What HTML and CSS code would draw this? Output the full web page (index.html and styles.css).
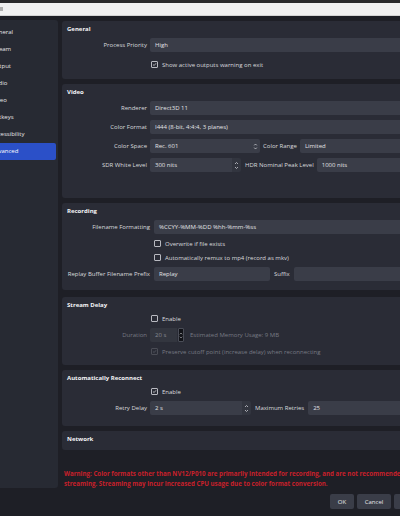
FILE: index.html
```html
<!DOCTYPE html>
<html lang="en">
<head>
    <meta charset="UTF-8">
    <meta name="viewport" content="width=device-width, initial-scale=1.0">
    <title>Settings</title>
    <link rel="stylesheet" href="styles.css">
</head>
<body>
    <div class="titlebar"><span class="app-icon"></span></div>

    <div class="window">
        <div class="main">
            <ul class="sidebar">
                <li>General</li>
                <li>Stream</li>
                <li>Output</li>
                <li>Audio</li>
                <li>Video</li>
                <li>Hotkeys</li>
                <li>Accessibility</li>
                <li class="active">Advanced</li>
            </ul>

            <div class="content">
                <!-- General -->
                <section class="group general">
                    <h2>General</h2>
                    <div class="row">
                        <span class="lbl">Process Priority</span>
                        <div class="field">High</div>
                    </div>
                    <div class="row cb-row spaced">
                        <span class="box checked"><svg viewBox="0 0 7 7"><path d="M1.5 3.6 L3 5 L5.6 1.8"/></svg></span>
                        <span>Show active outputs warning on exit</span>
                    </div>
                </section>

                <!-- Video -->
                <section class="group video">
                    <h2>Video</h2>
                    <div class="row">
                        <span class="lbl">Renderer</span>
                        <div class="field">Direct3D 11</div>
                    </div>
                    <div class="row">
                        <span class="lbl">Color Format</span>
                        <div class="field">I444 (8-bit, 4:4:4, 3 planes)</div>
                    </div>
                    <div class="row">
                        <span class="lbl">Color Space</span>
                        <div class="field combo color-space">
                            <span class="val">Rec. 601</span>
                            <svg class="arrows small" viewBox="0 0 5 9"><path d="M1.2 3.4 L2.5 2 L3.8 3.4 M1.2 5.6 L2.5 7 L3.8 5.6"/></svg>
                        </div>
                        <span class="lbl-inline">Color Range</span>
                        <div class="field">Limited</div>
                    </div>
                    <div class="row">
                        <span class="lbl">SDR White Level</span>
                        <div class="spin sdr">
                            <span class="val">300 nits</span>
                            <span class="spin-btns"><svg class="arrows" viewBox="0 0 5 11"><path d="M1 4 L2.5 2.5 L4 4 M1 7 L2.5 8.5 L4 7"/></svg></span>
                        </div>
                        <span class="lbl-inline hdr">HDR Nominal Peak Level</span>
                        <div class="field">1000 nits</div>
                    </div>
                </section>

                <!-- Recording -->
                <section class="group recording">
                    <h2>Recording</h2>
                    <div class="row">
                        <span class="lbl">Filename Formatting</span>
                        <div class="field">%CCYY-%MM-%DD %hh-%mm-%ss</div>
                    </div>
                    <div class="row cb-row">
                        <span class="box"></span>
                        <span>Overwrite if file exists</span>
                    </div>
                    <div class="row cb-row">
                        <span class="box"></span>
                        <span>Automatically remux to mp4 (record as mkv)</span>
                    </div>
                    <div class="row">
                        <span class="lbl">Replay Buffer Filename Prefix</span>
                        <div class="field prefix">Replay</div>
                        <span class="lbl-inline">Suffix</span>
                        <div class="field"></div>
                    </div>
                </section>

                <!-- Stream Delay -->
                <section class="group delay">
                    <h2>Stream Delay</h2>
                    <div class="row cb-row">
                        <span class="box"></span>
                        <span>Enable</span>
                    </div>
                    <div class="row">
                        <span class="lbl disabled">Duration</span>
                        <div class="spin duration">
                            <span class="val">20 s</span>
                            <span class="spin-btns dark"><svg class="arrows" viewBox="0 0 5 11"><path d="M1 4 L2.5 2.5 L4 4 M1 7 L2.5 8.5 L4 7"/></svg></span>
                        </div>
                        <span class="lbl-inline disabled memory">Estimated Memory Usage: 9 MB</span>
                    </div>
                    <div class="row cb-row disabled">
                        <span class="box checked dim"><svg viewBox="0 0 7 7"><path d="M1.5 3.6 L3 5 L5.6 1.8"/></svg></span>
                        <span>Preserve cutoff point (increase delay) when reconnecting</span>
                    </div>
                </section>

                <!-- Automatically Reconnect -->
                <section class="group reconnect">
                    <h2>Automatically Reconnect</h2>
                    <div class="row cb-row">
                        <span class="box checked"><svg viewBox="0 0 7 7"><path d="M1.5 3.6 L3 5 L5.6 1.8"/></svg></span>
                        <span>Enable</span>
                    </div>
                    <div class="row">
                        <span class="lbl">Retry Delay</span>
                        <div class="spin retry">
                            <span class="val">2 s</span>
                            <span class="spin-btns"><svg class="arrows" viewBox="0 0 5 11"><path d="M1 4 L2.5 2.5 L4 4 M1 7 L2.5 8.5 L4 7"/></svg></span>
                        </div>
                        <span class="lbl-inline retries">Maximum Retries</span>
                        <div class="field">25</div>
                    </div>
                </section>

                <!-- Network -->
                <section class="group network">
                    <h2>Network</h2>
                </section>

                <p class="warning">Warning: Color formats other than NV12/P010 are primarily intended for recording, and are not recommended when<br>streaming. Streaming may incur increased CPU usage due to color format conversion.</p>
            </div>
        </div>

        <div class="footer">
            <button>OK</button>
            <button>Cancel</button>
            <button>Apply</button>
        </div>
    </div>
</body>
</html>
```

FILE: styles.css
```css
body {
    margin: 0;
    padding: 0;
    width: 400px;
    height: 516px;
    overflow: hidden;
    background-color: #1e1f26;
    font-family: "Open Sans", "Noto Sans", sans-serif;
    font-size: 6px;
    color: #d9dadd;
}

.titlebar {
    height: 12px;
    border-top: 3px solid #2a2a2c;
    border-bottom: 1px solid #d4d4d4;
    background-color: #f1f1f1;
    display: flex;
    align-items: center;
}

.app-icon {
    width: 3px;
    height: 4px;
    background-color: #b0b0b0;
}

.window {
    width: 436px;
}

.main {
    display: flex;
    align-items: flex-start;
    gap: 4px;
    height: 476px;
}

/* Sidebar list */
.sidebar {
    list-style: none;
    margin: 4px 0 0 0;
    padding: 4px 0 0 0;
    width: 58px;
    height: 468px;
    box-sizing: border-box;
    background-color: #272a33;
    border-radius: 0 3px 3px 0;
    overflow: hidden;
    flex: none;
}

.sidebar li {
    height: 17px;
    line-height: 17px;
    margin-right: 2px;
    text-indent: -9px;
    white-space: nowrap;
    overflow: hidden;
    color: #e6e6e8;
}

.sidebar li.active {
    background-color: #2b50c8;
    border-radius: 0 2px 2px 0;
    color: #fff;
}

/* Settings groups */
.content {
    flex: 1;
    padding-top: 5px;
    display: flex;
    flex-direction: column;
    gap: 5px;
}

.group {
    --lw: 80px;
    background-color: #2a2c36;
    border-radius: 3px;
    padding: 3px 0 8px 5px;
    display: flex;
    flex-direction: column;
    gap: 5px;
}

.group h2 {
    margin: 0 0 -1px 0;
    height: 10px;
    line-height: 10px;
    font-size: 6px;
    font-weight: 700;
    color: #f4f4f6;
}

.general { padding-bottom: 10px; }
.video { padding-bottom: 26px; }
.recording { --lw: 83px; padding-bottom: 9px; }
.delay { margin-top: 2px; padding-bottom: 9px; }
.reconnect { padding-bottom: 11px; }
.network { padding-bottom: 7px; }

.row {
    display: flex;
    align-items: center;
    gap: 3px;
    height: 14px;
    white-space: nowrap;
}

.recording .row {
    gap: 4px;
}

.lbl {
    width: var(--lw);
    text-align: right;
    flex: none;
}

.lbl-inline {
    flex: none;
}

.disabled,
.row.disabled {
    color: #777a83;
}

.field {
    flex: 1;
    height: 14px;
    line-height: 14px;
    padding-left: 5px;
    background-color: #3a3d48;
    border-radius: 2px;
    color: #e2e3e6;
}

.combo {
    display: flex;
    align-items: center;
    justify-content: space-between;
    padding-right: 2px;
}

.color-space {
    flex: none;
    width: 103px;
}

.prefix {
    flex: none;
    width: 111px;
}

/* Spin boxes */
.spin {
    flex: none;
    display: flex;
    height: 14px;
    line-height: 14px;
    color: #e2e3e6;
}

.spin .val {
    flex: 1;
    padding-left: 5px;
    background-color: #3a3d48;
    border-radius: 2px 0 0 2px;
}

.spin-btns {
    width: 9px;
    display: flex;
    align-items: center;
    justify-content: center;
    background-color: #32353f;
    border-radius: 0 2px 2px 0;
}

.sdr { width: 91px; }
.retry { width: 101px; }
.duration { width: 34px; color: #8a8c94; }

.duration .val {
    background-color: #33363f;
}

.spin-btns.dark {
    width: 6px;
    margin-left: 1px;
    background-color: #121318;
    border: 1px solid #4a4d57;
    box-sizing: border-box;
    border-radius: 1px;
}

.hdr { margin-left: 1px; }
.retries { margin-left: 1px; margin-right: 1px; }
.memory { margin-left: 3px; }

.arrows {
    width: 5px;
    height: 11px;
    fill: none;
    stroke: #c9cad0;
    stroke-width: 0.8;
}

.arrows.small {
    width: 5px;
    height: 9px;
}

/* Checkboxes */
.cb-row {
    height: 9px;
    gap: 4px;
    padding-left: calc(var(--lw) + 4px);
}

.cb-row.spaced {
    margin-top: 3px;
}

.box {
    width: 7px;
    height: 7px;
    box-sizing: border-box;
    border: 1px solid #b8b9c0;
    border-radius: 1px;
    flex: none;
    display: flex;
}

.box svg {
    width: 5px;
    height: 5px;
    fill: none;
    stroke: #e8e8ea;
    stroke-width: 1;
}

.box.dim {
    border-color: #4a4c55;
}

.box.dim svg {
    stroke: #5d6069;
}

/* Warning and buttons */
.warning {
    margin: 14px 0 0 2px;
    line-height: 10px;
    font-size: 6.2px;
    font-weight: 700;
    color: #c8202b;
    white-space: nowrap;
}

.footer {
    display: flex;
    justify-content: flex-end;
    gap: 3px;
    padding-right: 8px;
    margin-top: 2px;
}

.footer button {
    width: 24px;
    height: 15px;
    padding: 0;
    border: none;
    border-radius: 2px;
    background-color: #3a3d48;
    color: #e6e6e8;
    font-family: "Open Sans", "Noto Sans", sans-serif;
    font-size: 6px;
}

.footer button + button {
    width: 34px;
}
```
